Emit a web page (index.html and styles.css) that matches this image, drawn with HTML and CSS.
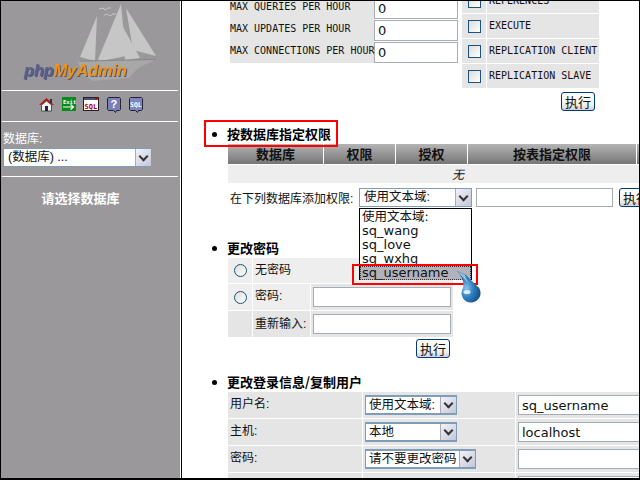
FILE: index.html
```html
<!DOCTYPE html>
<html lang="zh-CN">
<head>
<meta charset="utf-8">
<title>phpMyAdmin</title>
<link rel="stylesheet" href="styles.css">
</head>
<body>
<div class="frame">
  <aside class="side">
    <svg class="logo" width="176" height="89" viewBox="0 0 176 89">
      <g fill="#c6c6c6">
        <polygon points="121,4 126,56 97,62"/>
        <polygon points="126,8 156,56 133,50"/>
        <polygon points="123,27 140,58 125,60"/>
        <polygon points="97,16 95,61 80,57"/>
      </g>
      <g fill="#a9a8a9">
        <polygon points="78,62 157,59 138,68 129,78 93,81 84,76"/>
      </g>
      <path d="M80 61 L156 59.500" fill="none" stroke="#888688" stroke-width="1"/>
      <path d="M99 9 q5 -2 6 1 q3 -3 6 -2 M104 15 q4 -2 6 1 q3 -3 6 -2" fill="none" stroke="#c8c8c8" stroke-width="1"/>
      <text class="logo-text" x="24" y="76" textLength="103" lengthAdjust="spacingAndGlyphs"><tspan class="logo-php">php</tspan><tspan class="logo-my">MyAdmin</tspan></text>
    </svg>
    <hr class="side-rule">
    <nav class="side-icons">
      <svg width="15" height="15" viewBox="0 0 15 15"><polygon points="7.5,1 0,8 2,8 7.5,3.5 13,8 15,8" fill="#c01010"/><polygon points="2.5,8 7.5,4 12.5,8 12.5,14 2.5,14" fill="#f4f4f0" stroke="#333" stroke-width=".8"/><rect x="6" y="9" width="3" height="5" fill="#224"/><rect x="11" y="2" width="2" height="4" fill="#333"/></svg>
      <svg width="14" height="14" viewBox="0 0 14 14"><rect width="14" height="14" fill="#0a8a1a"/><text class="ico-exit" x="1" y="6.5">Exit</text><path d="M1 10h10M8.5 7.5l3 2.5-3 2.5" stroke="#fff" stroke-width="1.2" fill="none"/></svg>
      <svg width="16" height="14" viewBox="0 0 16 14"><rect x=".5" y=".5" width="15" height="13" fill="#fff" stroke="#222"/><rect x="1" y="1" width="14" height="2" fill="#50507a"/><rect x="12" y="1" width="2" height="2" fill="#c00"/><text class="ico-sql" x="1.5" y="11.5">SQL</text></svg>
      <svg width="14" height="16" viewBox="0 0 14 16"><path d="M1.5 .5h11l1 1v11l-1 1h-3l-1 2-2-2h-5l-1-1v-11z" fill="#7c80b8" stroke="#223"/><text class="ico-q" x="3.5" y="11">?</text></svg>
      <svg width="14" height="16" viewBox="0 0 14 16"><path d="M1.5 .5h11l1 1v11l-1 1h-3l-1 2-2-2h-5l-1-1v-11z" fill="#8084bc" stroke="#223"/><text class="ico-sql2" x="1" y="9.5">SQL</text></svg>
    </nav>
    <hr class="side-rule">
    <div class="side-db">
      <label class="side-label">数据库:</label>
      <div class="sel sel-side"><span class="sel-text">(数据库) ...</span><span class="sel-arrow"></span></div>
    </div>
    <hr class="side-rule side-rule-last">
    <p class="side-note">请选择数据库</p>
  </aside>

  <main class="main">
    <section class="limits">
      <div class="limit-grid">
        <span class="mono limit-label">MAX QUERIES PER HOUR</span><input class="field limit-input" value="0">
        <span class="mono limit-label">MAX UPDATES PER HOUR</span><input class="field limit-input" value="0">
        <span class="mono limit-label">MAX CONNECTIONS PER HOUR</span><input class="field limit-input" value="0">
      </div>
      <div class="priv-col">
        <div class="priv-grid">
          <span class="priv-box"><input type="checkbox" class="check"></span><span class="mono priv-label">REFERENCES</span>
          <span class="priv-box"><input type="checkbox" class="check"></span><span class="mono priv-label">EXECUTE</span>
          <span class="priv-box"><input type="checkbox" class="check"></span><span class="mono priv-label">REPLICATION CLIENT</span>
          <span class="priv-box"><input type="checkbox" class="check"></span><span class="mono priv-label">REPLICATION SLAVE</span>
        </div>
        <button class="btn btn-priv">执行</button>
      </div>
    </section>

    <h2 class="head head-db">按数据库指定权限</h2>
    <div class="db-table">
      <div class="db-head">数据库</div><div class="db-head">权限</div><div class="db-head">授权</div><div class="db-head">按表指定权限</div><div class="db-head"></div>
      <div class="db-none">无</div>
    </div>
    <div class="add-row">
      <span class="add-label">在下列数据库添加权限:</span>
      <div class="sel sel-add"><span class="sel-text">使用文本域:</span><span class="sel-arrow"></span></div>
      <input class="field add-input">
      <button class="btn btn-add">执行</button>
    </div>

    <h2 class="head head-pw">更改密码</h2>
    <div class="pw-table">
      <div class="pw-a"><input type="radio" class="radio"></div><div class="pw-b pw-wide">无密码</div>
      <div class="pw-a"><input type="radio" class="radio"></div><div class="pw-b">密码:</div><div class="pw-c"><input class="field pw-input"></div>
      <div class="pw-d"></div><div class="pw-d pw-text">重新输入:</div><div class="pw-c"><input class="field pw-input"></div>
    </div>
    <div class="pw-actions"><button class="btn">执行</button></div>

    <h2 class="head head-login">更改登录信息/复制用户</h2>
    <div class="login-table">
      <div class="login-cell login-text">用户名:</div>
      <div class="login-cell"><div class="sel sel-login"><span class="sel-text">使用文本域:</span><span class="sel-arrow"></span></div></div>
      <div class="login-cell"><input class="field login-input" value="sq_username"></div>
      <div class="login-cell login-text">主机:</div>
      <div class="login-cell"><div class="sel sel-login"><span class="sel-text">本地</span><span class="sel-arrow"></span></div></div>
      <div class="login-cell"><input class="field login-input" value="localhost"></div>
      <div class="login-cell login-text">密码:</div>
      <div class="login-cell"><div class="sel sel-login sel-pw"><span class="sel-text">请不要更改密码</span><span class="sel-arrow"></span></div></div>
      <div class="login-cell"><input class="field login-input"></div>
      <div class="login-cell"></div>
      <div class="login-cell"></div>
      <div class="login-cell"><input class="field login-input"></div>
    </div>

    <ul class="dropdown">
      <li>使用文本域:</li>
      <li>sq_wang</li>
      <li>sq_love</li>
      <li>sq_wxhg</li>
      <li class="dropdown-on">sq_username</li>
    </ul>
    <div class="mark mark-head"></div>
    <div class="mark mark-opt"></div>
    <svg class="pointer" width="26" height="34" viewBox="0 0 26 34">
      <defs><radialGradient id="drop" cx=".4" cy=".55" r=".6"><stop offset="0" stop-color="#8ec4ea"/><stop offset=".5" stop-color="#2f7fc0"/><stop offset="1" stop-color="#164f86"/></radialGradient></defs>
      <path d="M1 1 L10 5 L20 15 A9.500 9.500 0 1 1 7 18 Q9 10 1 1 Z" fill="url(#drop)"/>
      <path d="M1 1 L9 5 L12 13 Z" fill="#9cc0da"/>
      <ellipse cx="11" cy="22" rx="3.500" ry="2" fill="#d8eefa"/>
    </svg>
  </main>
</div>
</body>
</html>
```
FILE: styles.css
```css
* { box-sizing: border-box; }
html, body { margin: 0; padding: 0; background: #fff; }
body {
  width: 640px;
  height: 480px;
  overflow: hidden;
  font: 12px "Liberation Sans", "Noto Sans CJK SC", sans-serif;
  color: #111;
}
.frame {
  display: flex;
  width: 640px;
  height: 480px;
  border: 1px solid #000;
  border-bottom-width: 2px;
  overflow: hidden;
}

/* sidebar */
.side {
  flex: 0 0 180px;
  background: #9a989a;
  border-right: 1px solid #fff;
  box-shadow: 1px 0 0 #000;
  display: flex;
  flex-direction: column;
  color: #fff;
}
.logo { display: block; flex: none; margin-left: -1px; margin-top: -1px; }
.logo-text { font: italic bold 17px "Liberation Sans", sans-serif; filter: drop-shadow(1px 1px 0 #55557a); }
.logo-php { fill: #5a5f8c; }
.logo-my { fill: #ee9412; }
.side-rule { border: 0; border-top: 1px solid #fff; margin: 1px 2px 0 1px; height: 0; width: 176px; }
.side-icons { display: flex; align-items: flex-start; justify-content: flex-start; gap: 7.7px; height: 29px; padding: 6px 0 0 38px; }
.side-icons svg { flex: none; }
.ico-exit { font: bold 5.5px "DejaVu Sans Mono", monospace; fill: #fff; }
.ico-sql { font: bold 7px "DejaVu Sans Mono", monospace; fill: #b00010; }
.ico-q { font: bold 11px "Liberation Sans", sans-serif; fill: #fff; }
.ico-sql2 { font: bold 6.5px "DejaVu Sans Mono", monospace; fill: #fff; }
.side-db { height: 53px; padding: 9px 0 0 2px; display: flex; flex-direction: column; }
.side-label { font-size: 12px; line-height: 17px; }
.side-note { margin: 14px 0 0; padding-right: 20px; text-align: center; font-size: 13px; line-height: 16px; font-weight: 700; }

/* controls */
.sel {
  display: flex;
  flex: none;
  align-items: stretch;
  height: 19px;
  border: 1px solid #7f9db9;
  background: #fff;
  color: #111;
  font-size: 12.5px;
  line-height: 17px;
}
.sel-text { flex: 1; padding-left: 4px; white-space: nowrap; overflow: hidden; }
.sel-arrow {
  flex: 0 0 16px;
  background: linear-gradient(135deg, #f2f2f8, #c4c6d8);
  border-left: 1px solid #aab;
  position: relative;
}
.sel-arrow::after {
  content: "";
  position: absolute;
  left: 3px;
  top: 4px;
  width: 5px;
  height: 5px;
  margin-left: 1px;
  border-right: 2px solid #333;
  border-bottom: 2px solid #333;
  transform: rotate(45deg);
}
.sel-side { width: 149px; }
.field {
  display: block;
  flex: none;
  border: 1px solid #a5acb2;
  background: #fff;
  padding: 0 3px;
  margin: 0;
  border-radius: 0;
  outline: 0;
  color: #111;
  font: 13px "DejaVu Sans", sans-serif;
}
.btn {
  width: 34px;
  height: 19px;
  padding: 0;
  margin: 0;
  border: 1px solid #003c74;
  border-radius: 3px;
  background: linear-gradient(#fff, #f0f0ea 70%, #cfcfe0);
  color: #111;
  font: 13px/15px "Noto Sans CJK SC", sans-serif;
}
.check {
  appearance: none;
  display: block;
  width: 13px;
  height: 13px;
  margin: 0;
  border: 1px solid #1c5180;
  background: linear-gradient(135deg, #dcdcd7, #fff);
}
.radio {
  appearance: none;
  display: block;
  width: 13px;
  height: 13px;
  margin: 0;
  border: 1px solid #1c5180;
  border-radius: 50%;
  background: linear-gradient(135deg, #dcdcd7, #fff);
}
.mono { font: 10px "DejaVu Sans Mono", monospace; white-space: nowrap; }

/* main */
.main { flex: 1; position: relative; overflow: hidden; min-width: 0; margin-left: 1px; }
.limits { display: flex; align-items: flex-start; gap: 4px; margin: -12px 0 0 48px; height: 133px; }
.limit-grid {
  display: grid;
  grid-template-columns: 144px 84px;
  grid-auto-rows: 22px;
  margin-top: 8px;
  background: linear-gradient(90deg, #e5e5e5 144px, #fff 144px);
}
.limit-label { line-height: 14px; align-self: start; padding-top: 3px; }
.limit-input { width: 84px; height: 21px; align-self: end; }
.priv-col { display: flex; flex-direction: column; }
.priv-grid { display: grid; grid-template-columns: 24px 112px; grid-auto-rows: 24px; gap: 1px; }
.priv-box { background: #e5e5e5; display: flex; align-items: center; justify-content: center; }
.priv-label { background: #e5e5e5; padding: 5px 0 0 2px; line-height: 14px; }
.btn-priv { align-self: flex-end; margin: 4px 4px 0 0; }

.head {
  display: flex;
  align-items: center;
  margin: 0 0 0 30px;
  height: 16px;
  font: 700 13px/16px "Noto Sans CJK SC", sans-serif;
  color: #000;
  white-space: nowrap;
}
.head::before {
  content: "";
  flex: none;
  width: 5px;
  height: 5px;
  margin-right: 10px;
  border-radius: 50%;
  background: #000;
}
.head-db { margin-top: 4px; }
.db-table {
  display: grid;
  grid-template-columns: 95px 71px 71px 168px 51px;
  column-gap: 1px;
  width: 460px;
  margin: 2px 0 0 46px;
}
.db-head {
  height: 20px;
  background: linear-gradient(#b4b4b4, #767676);
  text-align: center;
  font: 700 13px/20px "Noto Sans CJK SC", sans-serif;
  color: #111;
}
.db-none {
  grid-column: 1 / -1;
  margin-top: 1px;
  height: 18px;
  background: #eee;
  text-align: center;
  font: italic 12px/18px "Noto Sans CJK SC", sans-serif;
}
.add-row { display: flex; align-items: center; height: 19px; margin: 5px 0 0 48px; }
.add-label { flex: none; width: 129px; white-space: nowrap; }
.sel-add { width: 113px; }
.add-input { width: 137px; height: 19px; margin-left: 4px; }
.btn-add { margin-left: 6px; flex: none; }

.head-pw { margin-top: 33px; }
.pw-table {
  display: grid;
  grid-template-columns: 24px 57px 142px;
  grid-template-rows: 25px 26px 26px;
  gap: 1px;
  width: 225px;
  margin: 2px 0 0 46px;
}
.pw-a { background: #eee; display: flex; align-items: center; justify-content: center; }
.pw-b { background: #eee; line-height: 24px; padding-left: 2px; white-space: nowrap; }
.pw-wide { grid-column: 2 / 4; }
.pw-c { background: #e5e5e5; display: flex; align-items: center; padding-left: 2px; }
.pw-d { background: #e5e5e5; }
.pw-text { line-height: 26px; padding-left: 2px; white-space: nowrap; }
.pw-input { width: 138px; height: 20px; }
.pw-actions { display: flex; justify-content: flex-end; width: 222px; margin: 2px 0 0 46px; }

.head-login { margin-top: 16px; }
.login-table {
  display: grid;
  grid-template-columns: 134px 152px 170px;
  grid-auto-rows: 26px;
  gap: 1px;
  margin: 2px 0 0 46px;
}
.login-cell { background: #e5e5e5; display: flex; align-items: center; padding-left: 2px; }
.login-text { line-height: 25px; align-items: flex-start; }
.sel-login { width: 92px; border-width: 2px 1px; border-color: #7f9db9; height: 20px; }
.sel-pw { width: 111px; }
.sel-login .sel-text { line-height: 16px; padding-left: 3px; }
.sel-login .sel-arrow::after { top: 3px; }
.login-input { width: 130px; height: 20px; }

/* open list, annotations */
.dropdown {
  position: absolute;
  left: 177px;
  top: 207px;
  width: 113px;
  height: 72px;
  margin: 0;
  padding: 1px 0 0;
  list-style: none;
  background: #fff;
  border: 1px solid #000;
  font: 13px/14px "DejaVu Sans", "Noto Sans CJK SC", sans-serif;
  color: #111;
}
.dropdown li { height: 14px; padding-left: 2px; white-space: nowrap; }
.dropdown li:first-child { font-size: 12.5px; }
.dropdown-on { background: #b1b2bc; outline: 1px dotted #333; outline-offset: -1px; }
.mark { position: absolute; border: 2px solid #f00; }
.mark-head { left: 22px; top: 119px; width: 134px; height: 27px; }
.mark-opt { left: 170px; top: 263px; width: 126px; height: 21px; }
.pointer { position: absolute; left: 274px; top: 269px; }
```
